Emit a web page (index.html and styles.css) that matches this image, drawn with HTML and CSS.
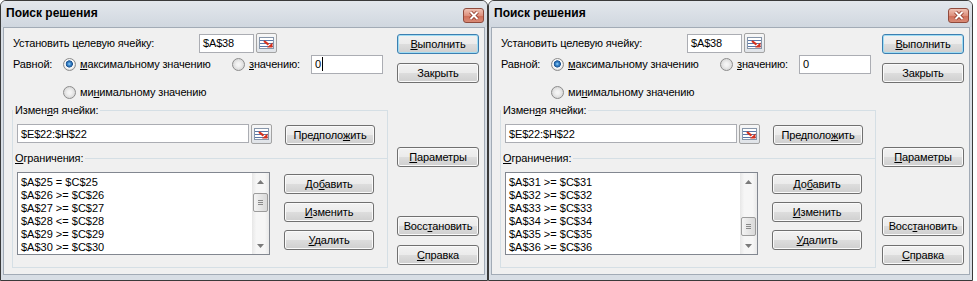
FILE: index.html
```html
<!DOCTYPE html>
<html lang="ru">
<head>
    <meta charset="UTF-8">
    <title>Поиск решения</title>
    <link rel="stylesheet" href="styles.css">
</head>
<body>
<div class="screen">

    <!-- Левое окно -->
    <div class="dialog">
        <div class="titlebar">
            <span class="title">Поиск решения</span>
            <span class="close-btn">
                <svg width="20" height="15" viewBox="0 0 20 15">
                    <path d="M6.5 4l7 7M13.5 4l-7 7" stroke="#8a3324" stroke-width="3.6"/>
                    <path d="M6.5 4l7 7M13.5 4l-7 7" stroke="#fff" stroke-width="2"/>
                </svg>
            </span>
        </div>
        <div class="client">
            <div class="main">
                <div class="row row-target">
                    <span class="target-label">Установить целевую ячейку:</span>
                    <span class="field target-field">$A$38</span>
                    <span class="refedit">
                        <svg width="15" height="12" viewBox="0 0 15 12">
                            <rect x="0.5" y="0.5" width="14" height="11" fill="#fff" stroke="#8796aa"/>
                            <path d="M1 3.5h13M1 6.5h13M1 9.5h13" stroke="#5a76a6"/>
                            <path d="M5 4l4.5 3.6" stroke="#d6311d" stroke-width="2.2"/>
                            <path d="M8 10.5h5.5v-5z" fill="#d6311d"/>
                        </svg>
                    </span>
                </div>
                <div class="row row-equal">
                    <span class="equal-label">Равной:</span>
                    <span class="option opt-max"><span class="radio on"></span><span><u>м</u>аксимальному значению</span></span>
                    <span class="option opt-value"><span class="radio"></span><span><u>з</u>начению:</span></span>
                    <span class="field value-field">0<span class="caret"></span></span>
                </div>
                <div class="row row-min">
                    <span class="option"><span class="radio"></span><span>ми<u>н</u>имальному значению</span></span>
                </div>

                <fieldset class="group group-cells">
                    <legend>Измен<u>я</u>я ячейки:</legend>
                    <div class="group-row">
                        <span class="field cells-field">$E$22:$H$22</span>
                        <span class="refedit">
                            <svg width="15" height="12" viewBox="0 0 15 12">
                                <rect x="0.5" y="0.5" width="14" height="11" fill="#fff" stroke="#8796aa"/>
                                <path d="M1 3.5h13M1 6.5h13M1 9.5h13" stroke="#5a76a6"/>
                                <path d="M5 4l4.5 3.6" stroke="#d6311d" stroke-width="2.2"/>
                                <path d="M8 10.5h5.5v-5z" fill="#d6311d"/>
                            </svg>
                        </span>
                        <button class="btn btn-guess">Предполо<u>ж</u>ить</button>
                    </div>
                </fieldset>

                <fieldset class="group group-limits">
                    <legend><u>О</u>граничения:</legend>
                    <div class="group-row">
                        <div class="listbox">
                            <div class="items">
                                <div>$A$25 = $C$25</div>
                                <div>$A$26 &gt;= $C$26</div>
                                <div>$A$27 &gt;= $C$27</div>
                                <div>$A$28 &lt;= $C$28</div>
                                <div>$A$29 &gt;= $C$29</div>
                                <div>$A$30 &gt;= $C$30</div>
                            </div>
                            <div class="scrollbar">
                                <span class="sb-arrow"><svg width="7" height="4" viewBox="0 0 7 4"><path d="M0 4h7L3.5 0z" fill="#7a7a7a"/></svg></span>
                                <span class="sb-thumb">
                                    <svg width="5" height="5" viewBox="0 0 5 5"><path d="M0 .5h5M0 2.5h5M0 4.5h5" stroke="#8a8a8a"/></svg>
                                </span>
                                <span class="sb-space"></span>
                                <span class="sb-arrow"><svg width="7" height="4" viewBox="0 0 7 4"><path d="M0 0h7L3.5 4z" fill="#7a7a7a"/></svg></span>
                            </div>
                        </div>
                        <div class="limit-buttons">
                            <button class="btn">До<u>б</u>авить</button>
                            <button class="btn"><u>И</u>зменить</button>
                            <button class="btn"><u>У</u>далить</button>
                        </div>
                    </div>
                </fieldset>
            </div>

            <div class="side">
                <button class="btn btn-default"><u>В</u>ыполнить</button>
                <button class="btn btn-close">Закрыть</button>
                <button class="btn btn-params"><u>П</u>араметры</button>
                <button class="btn btn-reset">Восс<u>т</u>ановить</button>
                <button class="btn btn-help"><u>С</u>правка</button>
            </div>
        </div>
    </div>

    <!-- Правое окно -->
    <div class="dialog dialog-narrow">
        <div class="titlebar">
            <span class="title">Поиск решения</span>
            <span class="close-btn">
                <svg width="20" height="15" viewBox="0 0 20 15">
                    <path d="M6.5 4l7 7M13.5 4l-7 7" stroke="#8a3324" stroke-width="3.6"/>
                    <path d="M6.5 4l7 7M13.5 4l-7 7" stroke="#fff" stroke-width="2"/>
                </svg>
            </span>
        </div>
        <div class="client">
            <div class="main">
                <div class="row row-target">
                    <span class="target-label">Установить целевую ячейку:</span>
                    <span class="field target-field">$A$38</span>
                    <span class="refedit">
                        <svg width="15" height="12" viewBox="0 0 15 12">
                            <rect x="0.5" y="0.5" width="14" height="11" fill="#fff" stroke="#8796aa"/>
                            <path d="M1 3.5h13M1 6.5h13M1 9.5h13" stroke="#5a76a6"/>
                            <path d="M5 4l4.5 3.6" stroke="#d6311d" stroke-width="2.2"/>
                            <path d="M8 10.5h5.5v-5z" fill="#d6311d"/>
                        </svg>
                    </span>
                </div>
                <div class="row row-equal">
                    <span class="equal-label">Равной:</span>
                    <span class="option opt-max"><span class="radio on"></span><span><u>м</u>аксимальному значению</span></span>
                    <span class="option opt-value"><span class="radio"></span><span><u>з</u>начению:</span></span>
                    <span class="field value-field">0</span>
                </div>
                <div class="row row-min">
                    <span class="option"><span class="radio"></span><span>ми<u>н</u>имальному значению</span></span>
                </div>

                <fieldset class="group group-cells">
                    <legend>Измен<u>я</u>я ячейки:</legend>
                    <div class="group-row">
                        <span class="field cells-field">$E$22:$H$22</span>
                        <span class="refedit">
                            <svg width="15" height="12" viewBox="0 0 15 12">
                                <rect x="0.5" y="0.5" width="14" height="11" fill="#fff" stroke="#8796aa"/>
                                <path d="M1 3.5h13M1 6.5h13M1 9.5h13" stroke="#5a76a6"/>
                                <path d="M5 4l4.5 3.6" stroke="#d6311d" stroke-width="2.2"/>
                                <path d="M8 10.5h5.5v-5z" fill="#d6311d"/>
                            </svg>
                        </span>
                        <button class="btn btn-guess">Предполо<u>ж</u>ить</button>
                    </div>
                </fieldset>

                <fieldset class="group group-limits">
                    <legend><u>О</u>граничения:</legend>
                    <div class="group-row">
                        <div class="listbox">
                            <div class="items">
                                <div>$A$31 &gt;= $C$31</div>
                                <div>$A$32 &gt;= $C$32</div>
                                <div>$A$33 &gt;= $C$33</div>
                                <div>$A$34 &gt;= $C$34</div>
                                <div>$A$35 &gt;= $C$35</div>
                                <div>$A$36 &gt;= $C$36</div>
                            </div>
                            <div class="scrollbar">
                                <span class="sb-arrow"><svg width="7" height="4" viewBox="0 0 7 4"><path d="M0 4h7L3.5 0z" fill="#7a7a7a"/></svg></span>
                                <span class="sb-thumb sb-thumb-low">
                                    <svg width="5" height="5" viewBox="0 0 5 5"><path d="M0 .5h5M0 2.5h5M0 4.5h5" stroke="#8a8a8a"/></svg>
                                </span>
                                <span class="sb-space"></span>
                                <span class="sb-arrow"><svg width="7" height="4" viewBox="0 0 7 4"><path d="M0 0h7L3.5 4z" fill="#7a7a7a"/></svg></span>
                            </div>
                        </div>
                        <div class="limit-buttons">
                            <button class="btn">До<u>б</u>авить</button>
                            <button class="btn"><u>И</u>зменить</button>
                            <button class="btn"><u>У</u>далить</button>
                        </div>
                    </div>
                </fieldset>
            </div>

            <div class="side">
                <button class="btn btn-default"><u>В</u>ыполнить</button>
                <button class="btn btn-close">Закрыть</button>
                <button class="btn btn-params"><u>П</u>араметры</button>
                <button class="btn btn-reset">Восс<u>т</u>ановить</button>
                <button class="btn btn-help"><u>С</u>правка</button>
            </div>
        </div>
    </div>

</div>
</body>
</html>
```

FILE: styles.css
```css
body {
    margin: 0;
    background-color: #ffffff;
    font-family: "Liberation Sans", Arial, sans-serif;
    font-size: 11px;
    letter-spacing: -0.15px;
    color: #000000;
}

.screen {
    display: flex;
    width: 977px;
    height: 281px;
    overflow: hidden;
}

/* Окно */
.dialog {
    flex: none;
    width: 488px;
    box-sizing: border-box;
    border: 1px solid #3a3a3a;
    border-radius: 6px 6px 0 0;
    background-color: #d8dee5;
    padding-bottom: 3px;
}

.dialog-narrow {
    width: 485px;
}

.titlebar {
    height: 26px;
    display: flex;
    align-items: center;
    justify-content: space-between;
    padding: 0 3px 0 5px;
    border-radius: 5px 5px 0 0;
    background: linear-gradient(#e3e7ec, #d0d7df);
}

.title {
    font-size: 12px;
    font-weight: bold;
    letter-spacing: 0;
    padding-bottom: 2px;
}

.close-btn {
    display: flex;
    width: 21px;
    height: 15px;
    margin-top: 3px;
    box-sizing: border-box;
    border: 1px solid #8f4a3c;
    border-radius: 3px;
    background: linear-gradient(#f0c2b4, #de917e 50%, #cf6d57 51%, #d98a76);
    align-items: center;
    justify-content: center;
}

.close-btn svg {
    margin: -1px;
}

.client {
    display: flex;
    margin: 0 2px;
    padding: 4px 5px 6px 0;
    border: 1px solid #a2abb6;
    background-color: #f0f0f0;
}

.main {
    width: 376px;
    padding-left: 8px;
}

.row {
    display: flex;
    align-items: center;
}

.row-target {
    height: 22px;
}

.target-label {
    width: 186px;
    padding-left: 1px;
}

.row-equal {
    height: 20px;
}

.equal-label {
    width: 50px;
    padding-left: 1px;
}

.row-min {
    height: 18px;
    margin-top: 9px;
    padding-left: 51px;
}

/* Поля ввода */
.field {
    display: flex;
    align-items: center;
    box-sizing: border-box;
    height: 19px;
    padding: 0 3px;
    border: 1px solid #abadb3;
    background-color: #ffffff;
    flex: none;
}

.target-field {
    width: 55px;
}

.value-field {
    width: 72px;
}

.cells-field {
    width: 232px;
}

.caret {
    width: 1px;
    height: 14px;
    margin-left: 1px;
    background-color: #000000;
}

.refedit {
    display: flex;
    align-items: center;
    justify-content: center;
    flex: none;
    width: 21px;
    height: 20px;
    margin-left: 2px;
    box-sizing: border-box;
    border: 1px solid #a3a3a3;
    border-radius: 2px;
    background: linear-gradient(#f7f7f7, #dfe3e8);
}

/* Переключатели */
.option {
    display: flex;
    align-items: center;
    gap: 4px;
}

.opt-max {
    width: 169px;
}

.opt-value {
    width: 79px;
}

.radio {
    flex: none;
    width: 13px;
    height: 13px;
    box-sizing: border-box;
    border-radius: 50%;
    border: 1px solid #8c8c8c;
    background: radial-gradient(circle at 50% 50%, #f6f6f6 0, #f1f1f1 2px, #d7d7d7 6px);
}

.radio.on {
    background: radial-gradient(circle at 48% 45%, #9bd8f7 0, #3b87cf 1.6px, #1d5491 3.3px, #ffffff 3.9px, #eeeeee 5px, #d7d7d7 6px);
}

/* Группы */
.group {
    width: 376px;
    box-sizing: border-box;
    margin: 0;
    border: 1px solid #d5dfe5;
}

.group legend {
    margin-left: -4px;
    padding: 0 2px;
    line-height: 13px;
}

.group-cells {
    margin-top: 3px;
    padding: 7px 0 13px 4px;
    border-bottom: 0;
}

.group-limits {
    margin-top: -6px;
    padding: 7px 0 12px 4px;
}

.group-row {
    display: flex;
    align-items: flex-start;
}

.btn-guess {
    width: 90px;
    margin-left: 13px;
    margin-top: 1px;
}

/* Список ограничений */
.listbox {
    display: flex;
    flex: none;
    width: 253px;
    height: 83px;
    box-sizing: border-box;
    border: 1px solid #828790;
    background-color: #ffffff;
}

.items {
    flex: 1;
    padding: 3px 0 0 3px;
    line-height: 13px;
    letter-spacing: 0;
}

.scrollbar {
    display: flex;
    flex-direction: column;
    width: 17px;
    background: linear-gradient(90deg, #e7e7e7, #f6f6f6 25%, #f6f6f6 75%, #e9e9e9);
}

.sb-arrow {
    display: flex;
    align-items: center;
    justify-content: center;
    height: 17px;
}

.sb-thumb {
    display: flex;
    align-items: center;
    justify-content: center;
    height: 19px;
    margin: 3px 1px 0;
    box-sizing: border-box;
    border: 1px solid #9c9c9c;
    border-radius: 2px;
    background: linear-gradient(90deg, #f4f4f4, #e6e6e6 50%, #d9d9d9);
}

.sb-thumb-low {
    margin-top: 27px;
}

.sb-space {
    flex: 1;
}

.limit-buttons {
    display: flex;
    flex-direction: column;
    gap: 8px;
    width: 90px;
    margin: 2px 0 0 14px;
}

/* Кнопки */
.btn {
    display: block;
    height: 20px;
    padding: 0;
    box-sizing: border-box;
    border: 1px solid #707070;
    border-radius: 3px;
    background: linear-gradient(#f2f2f2, #ebebeb 50%, #dddddd 51%, #cfcfcf);
    box-shadow: inset 0 0 0 1px #fafafa;
    font-family: "Liberation Sans", Arial, sans-serif;
    font-size: 11px;
    letter-spacing: -0.15px;
    color: #000000;
}

.side {
    display: flex;
    flex-direction: column;
    width: 82px;
    margin-left: auto;
}

.side .btn {
    width: 82px;
}

.btn-default {
    margin-top: 2px;
    border-color: #3c7fb1;
    box-shadow: inset 0 0 0 1px #9fdcf3;
}

.btn-close {
    margin-top: 9px;
}

.btn-params {
    margin-top: 64px;
}

.btn-reset {
    margin-top: 49px;
}

.btn-help {
    margin-top: 9px;
}
```
